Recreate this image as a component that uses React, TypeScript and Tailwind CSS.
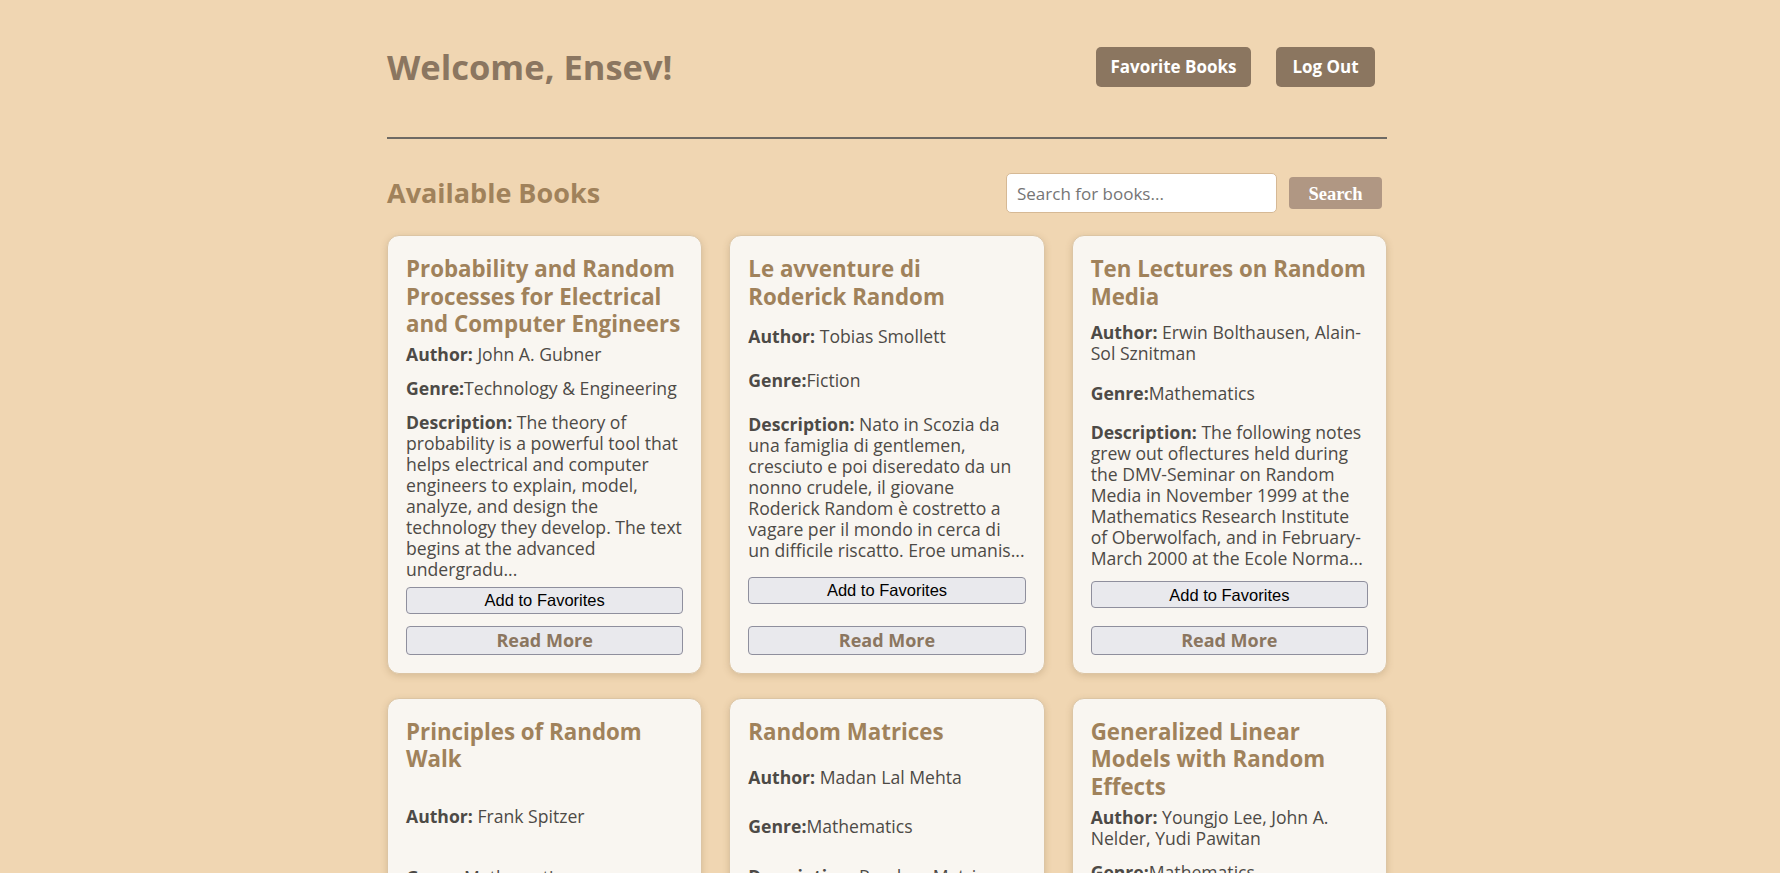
import React from "react";

type Book = {
  title: string;
  author: string;
  genre: string;
  desc: string;
};

const books: Book[] = [
  {
    title: "Probability and Random Processes for Electrical and Computer Engineers",
    author: "John A. Gubner",
    genre: "Technology & Engineering",
    desc: "The theory of probability is a powerful tool that helps electrical and computer engineers to explain, model, analyze, and design the technology they develop. The text begins at the advanced undergradu...",
  },
  {
    title: "Le avventure di Roderick\u00a0Random",
    author: "Tobias Smollett",
    genre: "Fiction",
    desc: "Nato in Scozia da una famiglia di gentlemen, cresciuto e poi diseredato da un nonno crudele, il giovane Roderick Random è costretto a vagare per il mondo in cerca di un difficile riscatto. Eroe umanis...",
  },
  {
    title: "Ten Lectures on Random Media",
    author: "Erwin Bolthausen, Alain-Sol Sznitman",
    genre: "Mathematics",
    desc: "The following notes grew out oflectures held during the DMV-Seminar on Random Media in November 1999 at the Mathematics Research Institute of Oberwolfach, and in February-March 2000 at the Ecole Norma...",
  },
  {
    title: "Principles of Random Walk",
    author: "Frank Spitzer",
    genre: "Mathematics",
    desc: "This book is devoted exclusively to a very special class of random processes.",
  },
  {
    title: "Random Matrices",
    author: "Madan Lal Mehta",
    genre: "Mathematics",
    desc: "Random Matrices gives a coherent and detailed description of analytical methods devised to study random matrices. These methods are critical to the understanding of various fields in in mathematics an...",
  },
  {
    title: "Generalized Linear Models with Random Effects",
    author: "Youngjo Lee, John A. Nelder, Yudi Pawitan",
    genre: "Mathematics",
    desc: "Since their introduction in 1972, generalized linear models (GLMs) have proven useful in the generalization of classical normal models. Presenting methods for fitting GLMs with random effects to dat...",
  },
];

function BookCard({ book }: { book: Book }) {
  return (
    <div className="flex flex-col justify-between rounded-[12px] border border-[#dcc5a4] bg-[#f9f6f1] px-[18px] pt-[19px] pb-[18px] shadow-[0_2px_7px_rgba(120,90,50,0.22)]">
      <h3 className="text-[22.3px] font-bold leading-[27.6px] text-[#a0825b]">
        {book.title}
      </h3>
      <p className="my-[6.5px] text-[17.6px] leading-[21px] text-[#4d4a46]">
        <span className="font-bold">Author:</span> {book.author}
      </p>
      <p className="my-[6.5px] text-[17.6px] leading-[21px] text-[#4d4a46]">
        <span className="font-bold">Genre:</span>
        {book.genre}
      </p>
      <p className="my-[6.5px] text-[17.6px] leading-[21px] text-[#4d4a46]">
        <span className="font-bold">Description:</span> {book.desc}
      </p>
      <button className="h-[27px] w-full rounded-[4px] border border-[#8f8f9d] bg-[#e9e9ed] font-['Liberation_Sans',Arial,sans-serif] text-[16.5px] leading-none text-black">
        Add to Favorites
      </button>
      <button className="mt-[12px] h-[29px] w-full rounded-[4px] border border-[#8f8f9d] bg-[#e9e9ed] text-[18px] font-bold leading-none text-[#8b7660]">
        Read More
      </button>
    </div>
  );
}

export default function App() {
  return (
    <div className="min-h-screen bg-[#f0d6b2] font-['Open_Sans',sans-serif]">
      <div className="pr-[6px]">
        <div className="mx-auto w-[1000px]">
          <header className="flex items-center justify-between pt-[47px]">
            <h1 className="text-[34.5px] font-bold leading-[40px] text-[#8b7660]">
              Welcome, Ensev!
            </h1>
            <div className="flex gap-[25px] pr-[12px]">
              <button className="h-10 w-[155px] rounded-[5px] bg-[#8b7660] text-[17px] font-bold text-white">
                Favorite Books
              </button>
              <button className="h-10 w-[99px] rounded-[5px] bg-[#8b7660] text-[17px] font-bold text-white">
                Log Out
              </button>
            </div>
          </header>
          <hr className="mt-[50px] border-t-2 border-[#6e6a64]" />
          <div className="mt-[34px] flex items-center justify-between">
            <h2 className="text-[27px] font-bold leading-[40px] text-[#a0825b]">
              Available Books
            </h2>
            <div className="flex items-center gap-[12px] pr-[5px]">
              <input
                placeholder="Search for books..."
                className="h-10 w-[271px] rounded-[5px] border border-[#d6b995] bg-white px-[10px] text-[17px] text-[#333] outline-none placeholder:text-[#757575]"
              />
              <button className="h-8 w-[93px] rounded-[4px] bg-[#b09783] pt-[2px] font-['Liberation_Serif',serif] text-[18.5px] font-bold leading-none text-white">
                Search
              </button>
            </div>
          </div>
          <div className="mt-[22px] grid grid-cols-3 gap-x-[27px] gap-y-[24px] pb-10">
            {books.map((b) => (
              <BookCard key={b.title} book={b} />
            ))}
          </div>
        </div>
      </div>
    </div>
  );
}
